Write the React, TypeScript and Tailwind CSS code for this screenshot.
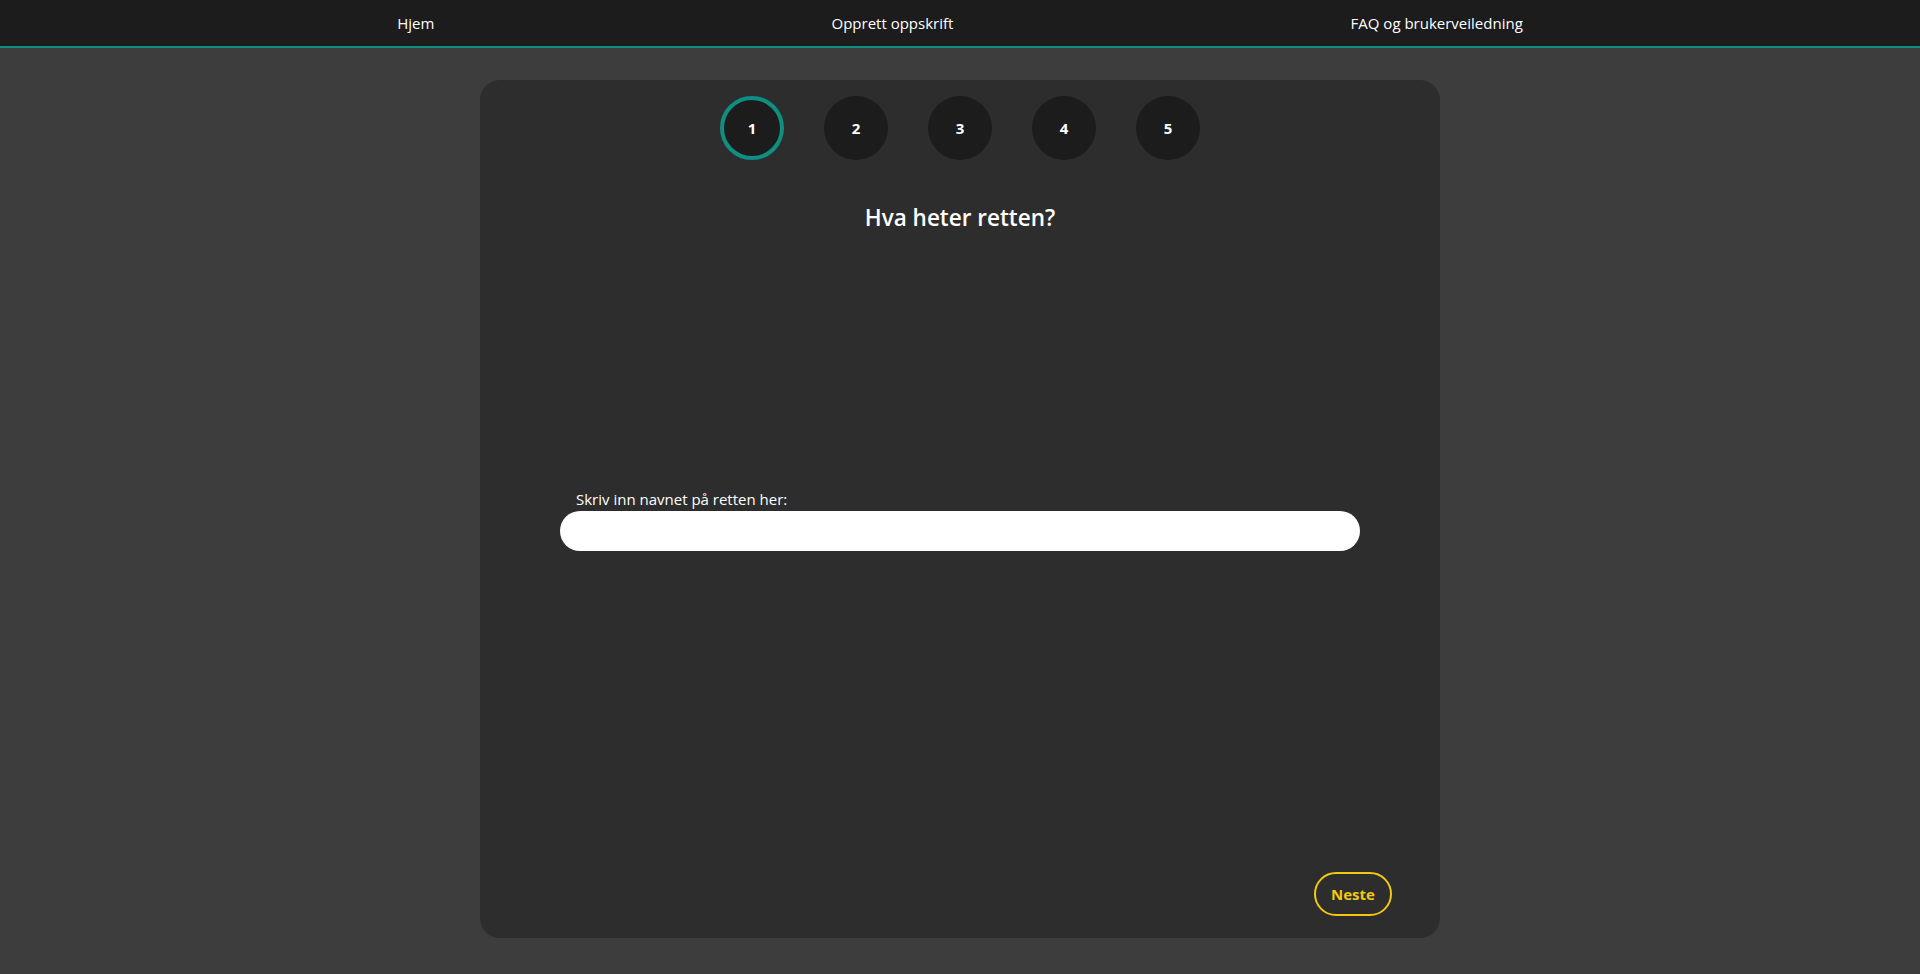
import React from "react";

export default function App() {
  const steps = [1, 2, 3, 4, 5];
  return (
    <div
      className="min-h-[974px] bg-[#3d3d3d] text-white"
      style={{ fontFamily: '"Open Sans", "Noto Sans", sans-serif' }}
    >
      <nav className="h-[48px] bg-[#1c1c1c] border-b-2 border-[#0f8f81] flex items-center justify-evenly text-[15px] text-white">
        <a className="cursor-pointer">Hjem</a>
        <a className="cursor-pointer">Opprett oppskrift</a>
        <a className="cursor-pointer">FAQ og brukerveiledning</a>
      </nav>
      <div className="pt-8 pb-9">
        <div className="mx-auto w-[960px] h-[858px] rounded-[20px] bg-[#2d2d2d] flex flex-col">
          <div className="pt-4 flex justify-center gap-10">
            {steps.map((s) => (
              <div
                key={s}
                className={
                  s === 1
                    ? "w-16 h-16 rounded-full bg-[#1c1c1c] border-4 border-[#0f8f81] flex items-center justify-center font-bold text-[15px]"
                    : "w-16 h-16 rounded-full bg-[#1c1c1c] flex items-center justify-center font-bold text-[15px]"
                }
              >
                {s}
              </div>
            ))}
          </div>
          <h1 className="mt-[42px] text-center text-[22.5px] leading-8 font-semibold">
            Hva heter retten?
          </h1>
          <div className="mt-[253px] w-[800px] mx-auto flex flex-col">
            <label className="pl-4 text-[15px] leading-6">Skriv inn navnet på retten her:</label>
            <input
              type="text"
              className="h-10 w-full rounded-full bg-white text-black px-4 outline-none"
            />
          </div>
          <div className="flex-1" />
          <div className="flex justify-end pr-12 pb-[22px]">
            <button className="w-[78px] h-[44px] rounded-full border-2 border-[#f2c811] text-[#f2c811] font-bold text-[15px]">
              Neste
            </button>
          </div>
        </div>
      </div>
    </div>
  );
}
